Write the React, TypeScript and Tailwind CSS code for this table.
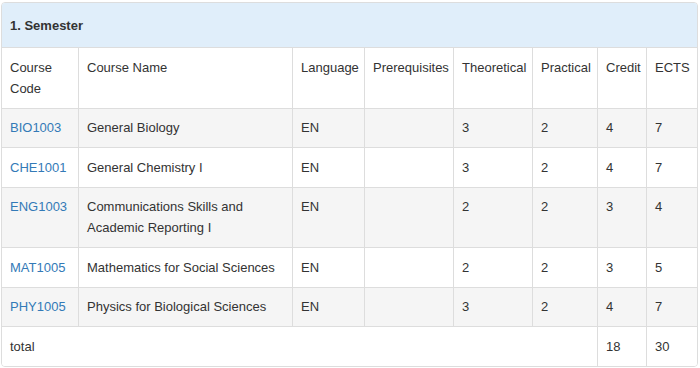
import React from "react";

type Course = {
  code: string;
  name: string;
  lang: string;
  theo: number;
  prac: number;
  credit: number;
  ects: number;
};

const COURSES: Course[] = [
  { code: "BIO1003", name: "General Biology", lang: "EN", theo: 3, prac: 2, credit: 4, ects: 7 },
  { code: "CHE1001", name: "General Chemistry I", lang: "EN", theo: 3, prac: 2, credit: 4, ects: 7 },
  { code: "ENG1003", name: "Communications Skills and Academic Reporting I", lang: "EN", theo: 2, prac: 2, credit: 3, ects: 4 },
  { code: "MAT1005", name: "Mathematics for Social Sciences", lang: "EN", theo: 2, prac: 2, credit: 3, ects: 5 },
  { code: "PHY1005", name: "Physics for Biological Sciences", lang: "EN", theo: 3, prac: 2, credit: 4, ects: 7 },
];

const cell = "border border-[#dddddd] px-2 py-[8.75px] align-top text-left font-normal";

export default function App() {
  return (
    <div className="h-[368px] w-[700px] bg-white pt-[2px] pl-[1px] pr-[2px] font-['Liberation_Sans',Arial,sans-serif] text-[13px] leading-[21px] text-[#333333]">
      <div className="overflow-hidden rounded-[4px] border border-[#dddddd]">
        <div className="flex h-[45px] items-center border-b border-[#dddddd] bg-[#e0eefa] px-2 font-bold">
          1. Semester
        </div>
        <table className="-mb-px w-[calc(100%+2px)] -mx-px table-fixed border-collapse">
          <colgroup>
            <col className="w-[77px]" />
            <col className="w-[214px]" />
            <col className="w-[72px]" />
            <col className="w-[89px]" />
            <col className="w-[79px]" />
            <col className="w-[65px]" />
            <col className="w-[49px]" />
            <col className="w-[51px]" />
          </colgroup>
          <thead>
            <tr>
              <th className={`${cell} border-t-0`}>Course Code</th>
              <th className={`${cell} border-t-0`}>Course Name</th>
              <th className={`${cell} border-t-0`}>Language</th>
              <th className={`${cell} border-t-0`}>Prerequisites</th>
              <th className={`${cell} border-t-0`}>Theoretical</th>
              <th className={`${cell} border-t-0`}>Practical</th>
              <th className={`${cell} border-t-0`}>Credit</th>
              <th className={`${cell} border-t-0`}>ECTS</th>
            </tr>
          </thead>
          <tbody>
            {COURSES.map((c, i) => (
              <tr key={c.code} className={i % 2 === 0 ? "bg-[#f5f5f5]" : "bg-white"}>
                <td className={cell}>
                  <a href="#" className="text-[#337ab7]">{c.code}</a>
                </td>
                <td className={cell}>{c.name}</td>
                <td className={cell}>{c.lang}</td>
                <td className={cell}></td>
                <td className={cell}>{c.theo}</td>
                <td className={cell}>{c.prac}</td>
                <td className={cell}>{c.credit}</td>
                <td className={cell}>{c.ects}</td>
              </tr>
            ))}
            <tr className="bg-white">
              <td className={cell} colSpan={6}>total</td>
              <td className={cell}>18</td>
              <td className={cell}>30</td>
            </tr>
          </tbody>
        </table>
      </div>
    </div>
  );
}
